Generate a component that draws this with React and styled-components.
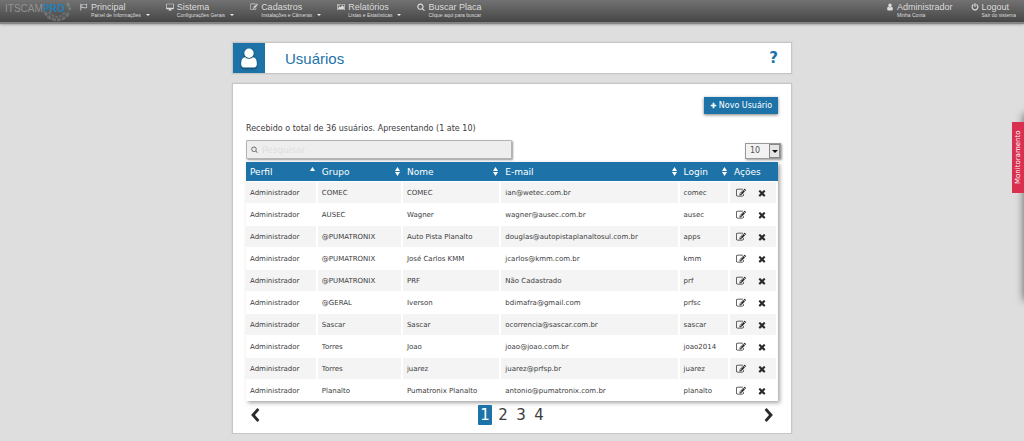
import React from 'react';
import styled, {createGlobalStyle, css} from 'styled-components';

const colors = {
  blue: '#1d73a8',
  text: '#3c3c3c',
  page: '#dedede',
  stripe: '#f4f4f4',
  red: '#d9304f',
};

const fonts = {
  body: '"DejaVu Sans", Verdana, sans-serif',
  title: '"Liberation Sans", Arial, sans-serif',
};

const GlobalStyle = createGlobalStyle`
  * {
    box-sizing: border-box;
  }

  body {
    margin: 0;
    background: ${colors.page};
    color: ${colors.text};
    font-family: ${fonts.body};
    font-size: 8px;
  }
`;

const icons = {
  user: 'M1536 1399q0 109-62.5 187t-150.5 78h-854q-88 0-150.5-78t-62.5-187q0-85 8.5-160.5t31.5-152 58.5-131 94-89 134.5-34.5q131 128 313 128t313-128q76 0 134.5 34.5t94 89 58.5 131 31.5 152 8.5 160.5zm-256-887q0 159-112.5 271.5t-271.5 112.5-271.5-112.5-112.5-271.5 112.5-271.5 271.5-112.5 271.5 112.5 112.5 271.5z',
  edit: 'M888 1184l116-116-152-152-116 116v56h96v96h56zm440-720q-16-16-33 1l-350 350q-17 17-1 33t33-1l350-350q17-17 1-33zm80 594v190q0 119-84.5 203.5t-203.5 84.5h-832q-119 0-203.5-84.5t-84.5-203.5v-832q0-119 84.5-203.5t203.5-84.5h832q63 0 117 25 15 7 18 23 3 17-9 29l-49 49q-14 14-32 8-23-6-45-6h-832q-66 0-113 47t-47 113v832q0 66 47 113t113 47h832q66 0 113-47t47-113v-126q0-13 9-22l64-64q15-15 35-7t20 29zm-96-738l288 288-672 672h-288v-288zm444 132l-92 92-288-288 92-92q28-28 68-28t68 28l152 152q28 28 28 68t-28 68z',
  remove: 'M1490 1322q0 40-28 68l-136 136q-28 28-68 28t-68-28l-294-294-294 294q-28 28-68 28t-68-28l-136-136q-28-28-28-68t28-68l294-294-294-294q-28-28-28-68t28-68l136-136q28-28 68-28t68 28l294 294 294-294q28-28 68-28t68 28l136 136q28 28 28 68t-28 68l-294 294 294 294q28 28 28 68z',
  search: 'M1216 832q0-185-131.5-316.5t-316.5-131.5-316.5 131.5-131.5 316.5 131.5 316.5 316.5 131.5 316.5-131.5 131.5-316.5zm512 832q0 52-38 90t-90 38q-54 0-90-38l-343-342q-179 124-399 124-143 0-273.5-55.5t-225-150-150-225-55.5-273.5 55.5-273.5 150-225 225-150 273.5-55.5 273.5 55.5 225 150 150 225 55.5 273.5q0 220-124 399l343 343q37 37 37 90z',
  power: 'M1664 896q0 156-61 298t-164 245-245 164-298 61-298-61-245-164-164-245-61-298q0-182 80.5-343t226.5-270q43-32 95.5-25t83.5 50q32 42 24.5 94.5t-49.5 84.5q-98 74-151.5 181t-53.5 228q0 104 40.5 198.5t109.5 163.5 163.5 109.5 198.5 40.5 198.5-40.5 163.5-109.5 109.5-163.5 40.5-198.5q0-121-53.5-228t-151.5-181q-42-32-49.5-84.5t24.5-94.5q31-43 84-50t95 25q146 109 226.5 270t80.5 343zm-640-768v640q0 52-38 90t-90 38-90-38-38-90v-640q0-52 38-90t90-38 90 38 38 90z',
  flag: 'M160 128q90 0 90 100v1436h-160v-1436q0-100 70-100zM340 330q220-150 440-70 220 120 440 70l360-140v860q-220 130-400 150-200 0-400-90-220-60-440 80zM480 420v540q160-60 340-20 200 90 380 90 120-20 240-80v-540q-200 90-360 60-300-140-400-110-100 0-200 60z',
  desktop: 'M160 160h1472q130 0 130 130v960q0 130-130 130h-520q0 110 70 180h60v130h-692v-130h60q70-70 70-180h-520q-130 0-130-130v-960q0-130 130-130zM180 300v780h1432v-780z',
  picture: 'M100 224h1592q100 0 100 100v1144q0 100-100 100h-1592q-100 0-100-100v-1144q0-100 100-100zM140 350v1092h1512v-1092zM260 1320v-200l330-330 170 170 450-450 330 330v480zM300 620a150 150 0 1 0 300 0a150 150 0 1 0 -300 0z',
  plus: 'M1600 736v320q0 60-60 60h-424v424q0 60-60 60h-320q-60 0-60-60v-424h-424q-60 0-60-60v-320q0-60 60-60h424v-424q0-60 60-60h320q60 0 60 60v424h424q60 0 60 60z',
  previous: 'M1427 301l-531 595 531 595q37 45 0 90l-166 166q-45 37-90 0l-742-806q-37-45 0-90l742-806q45-37 90 0l166 166q37 45 0 90z',
  next: 'M365 301l531 595-531 595q-37 45 0 90l166 166q45 37 90 0l742-806q37-45 0-90l-742-806q-45-37-90 0l-166 166q-37 45 0 90z',
};

const StyledIcon = styled.svg`
  display: block;
  flex: none;
  width: ${({$size}) => $size}px;
  height: ${({$size}) => $size}px;
  fill: currentColor;
  fill-rule: ${({$solid}) => ($solid ? 'nonzero' : 'evenodd')};
`;

const Icon = ({name, size}) => (
  <StyledIcon $size={size} $solid={name === 'user'} viewBox='0 0 1792 1792' aria-hidden='true'>
    <path d={icons[name]} />
  </StyledIcon>
);

const StyledTopBar = styled.header`
  display: flex;
  justify-content: space-between;
  height: 24px;
  padding: 0 8px 0 4px;
  border-bottom: 2px solid #858585;
  background: linear-gradient(#727272, #464646);
  box-shadow: 0 1px 2px rgba(0, 0, 0, .25);
  font-family: ${fonts.title};
`;

const StyledGroup = styled.nav`
  display: flex;
  gap: ${({$gap}) => $gap}px;
`;

const StyledLogo = styled.svg`
  display: block;
  width: 68px;
  height: 22px;
  margin-right: -8px;
  font-family: ${fonts.title};
  font-size: 10px;
`;

const StyledNavLink = styled.a`
  display: flex;
  gap: 3px;
  padding-top: 3px;
  color: #dcdcdc;
  text-decoration: none;
  white-space: nowrap;
`;

const StyledNavTitle = styled.span`
  display: block;
  font-size: 9px;
  line-height: 9px;
`;

const StyledNavLead = styled.span`
  display: block;
  font-size: 5px;
  line-height: 6px;
`;

const StyledCaret = styled.span`
  align-self: flex-start;
  margin: 11px 0 0 2px;
  border: 2px solid transparent;
  border-top-color: #eee;
  border-bottom: 0;
`;

const StyledMain = styled.main`
  width: 100%;
  max-width: 560px;
  margin: 18px auto 0;
`;

const card = css`
  border: 1px solid #c6c6c6;
  background: #fff;
  box-shadow: 0 0 1px rgba(0, 0, 0, .2);
`;

const StyledHeading = styled.div`
  ${card}
  display: flex;
  align-items: center;
  height: 32px;
  margin-bottom: 9px;
  padding-right: 13px;
  color: ${colors.blue};
`;

const StyledHeadingIcon = styled.div`
  display: flex;
  align-items: center;
  justify-content: center;
  width: 32px;
  height: 30px;
  background: ${colors.blue};
  color: #fff;

  svg {
    filter: drop-shadow(0 1px 1px rgba(0, 0, 0, .5));
  }
`;

const StyledTitle = styled.h1`
  flex: 1;
  margin: 2px 0 0 20px;
  font: 15px/18px ${fonts.title};
`;

const StyledHelp = styled.button`
  padding: 0;
  border: 0;
  background: none;
  color: ${colors.blue};
  font: bold 15px/18px ${fonts.body};
`;

const StyledPanel = styled.section`
  ${card}
  padding: 13px 13px 8px;
`;

const StyledNewButton = styled.button`
  display: flex;
  align-items: center;
  justify-content: center;
  gap: 2px;
  width: 74px;
  height: 17px;
  margin-left: auto;
  padding: 0;
  border: 0;
  background: ${colors.blue};
  box-shadow: 0 1px 3px rgba(0, 0, 0, .5);
  color: #fff;
  font: 8px/12px ${fonts.body};
`;

const StyledSummary = styled.p`
  margin: 9px 0 5px;
  font-size: 8px;
  line-height: 12px;
`;

const StyledFilters = styled.div`
  display: flex;
  align-items: flex-end;
  justify-content: space-between;
  margin-bottom: 3px;
`;

const StyledSearch = styled.label`
  display: flex;
  align-items: center;
  gap: 4px;
  width: 50%;
  height: 19px;
  padding: 0 4px;
  border: 1px solid #b4b4b4;
  border-radius: 1px;
  background: #eee;
  box-shadow: 1px 1px 2px rgba(0, 0, 0, .4);
  color: #777;
`;

const StyledSearchInput = styled.input`
  flex: 1;
  min-width: 0;
  padding: 0;
  border: 0;
  outline: 0;
  background: none;
  font: 9px/12px ${fonts.body};

  &::placeholder {
    color: #dfdfdf;
    opacity: 1;
  }
`;

const StyledSize = styled.label`
  display: flex;
  width: 36px;
  height: 16px;
  margin-right: -3px;
  border: 1px solid #999;
  background: #f2f2f2;
  box-shadow: 1px 1px 2px rgba(0, 0, 0, .4);
`;

const StyledSelect = styled.select`
  flex: 1;
  min-width: 0;
  padding: 0 0 0 4px;
  border: 0;
  appearance: none;
  background: none;
  color: #555;
  font: 8px/14px ${fonts.body};
`;

const StyledSizeArrow = styled.span`
  display: flex;
  align-items: center;
  justify-content: center;
  width: 11px;
  border: 1px solid #888;
  background: #e4e4e4;

  &::before {
    content: '';
    border: 3px solid transparent;
    border-top-color: #111;
    border-bottom: 0;
  }
`;

const StyledTable = styled.table`
  width: 100%;
  table-layout: fixed;
  border-collapse: separate;
  border-spacing: 0;
  box-shadow: 2px 2px 4px rgba(0, 0, 0, .35);
`;

const StyledHeadCell = styled.th`
  width: ${({$width}) => $width};
  height: 19px;
  padding: 0 3px 0 4px;
  background: ${colors.blue};
  color: #fff;
  font-size: 9px;
  font-weight: normal;
  text-align: left;
`;

const StyledHeadLabel = styled.div`
  display: flex;
  align-items: center;
  justify-content: space-between;
`;

const StyledSort = styled.svg`
  display: block;
  flex: none;
  width: 5px;
  height: 9px;
  fill: #fff;
`;

const StyledCell = styled.td`
  height: 22px;
  padding: 0 0 0 4px;
  border-top: 1px solid #fff;
  border-right: 2px solid #fff;
  font-size: 7px;
  line-height: 10px;
  white-space: nowrap;
`;

const StyledRow = styled.tr`
  background: #fff;

  &:nth-child(odd) {
    background: ${colors.stripe};
  }
`;

const StyledActions = styled.div`
  display: flex;
  gap: 11px;
  padding-left: 2px;
`;

const StyledIconButton = styled.button`
  display: block;
  padding: 0;
  border: 0;
  background: none;
  color: #2a2a2a;
`;

const StyledPagination = styled.nav`
  display: flex;
  align-items: center;
  justify-content: space-between;
  margin-top: 4px;
  padding: 0 2px;
`;

const StyledPages = styled.div`
  display: flex;
  gap: 4px;
`;

const StyledPage = styled.button`
  width: 14px;
  height: 20px;
  padding: 0;
  border: 0;
  border-radius: 1px;
  background: ${({$active}) => ($active ? colors.blue : 'none')};
  color: ${({$active}) => ($active ? '#fff' : colors.text)};
  font: 15px/20px ${fonts.body};
`;

const StyledMonitor = styled.button`
  position: fixed;
  top: 122px;
  right: 0;
  width: 12px;
  height: 71px;
  padding: 0;
  border: 0;
  background: ${colors.red};
  color: #fff;
  font: 7px/12px ${fonts.body};
  writing-mode: vertical-rl;

  span {
    display: block;
    transform: rotate(180deg);
  }
`;

// the drawer is closed, only its shadow reaches into the page
const StyledDrawer = styled.div`
  position: fixed;
  top: 114px;
  right: -10px;
  width: 10px;
  height: 186px;
  box-shadow: 0 0 8px rgba(0, 0, 0, .6);
`;

const menu = [
  {icon: 'flag', title: 'Principal', lead: 'Painel de Informações', caret: true},
  {icon: 'desktop', title: 'Sistema', lead: 'Configurações Gerais', caret: true},
  {icon: 'edit', title: 'Cadastros', lead: 'Instalações e Câmeras', caret: true},
  {icon: 'picture', title: 'Relatórios', lead: 'Listas e Estatísticas', caret: true},
  {icon: 'search', title: 'Buscar Placa', lead: 'Clique aqui para buscar'},
];

const account = [
  {icon: 'user', title: 'Administrador', lead: 'Minha Conta'},
  {icon: 'power', title: 'Logout', lead: 'Sair do sistema'},
];

const columns = [
  {label: 'Perfil', width: '13.5%', sort: 'asc'},
  {label: 'Grupo', width: '16%', sort: 'both'},
  {label: 'Nome', width: '18.5%', sort: 'both'},
  {label: 'E-mail', width: '33.5%', sort: 'both'},
  {label: 'Login', width: '9.5%', sort: 'both'},
  {label: 'Ações', width: '9%'},
];

const users = [
  ['Administrador', 'COMEC', 'COMEC', 'ian@wetec.com.br', 'comec'],
  ['Administrador', 'AUSEC', 'Wagner', 'wagner@ausec.com.br', 'ausec'],
  ['Administrador', '@PUMATRONIX', 'Auto Pista Planalto', 'douglas@autopistaplanaltosul.com.br', 'apps'],
  ['Administrador', '@PUMATRONIX', 'José Carlos KMM', 'jcarlos@kmm.com.br', 'kmm'],
  ['Administrador', '@PUMATRONIX', 'PRF', 'Não Cadastrado', 'prf'],
  ['Administrador', '@GERAL', 'Iverson', 'bdimafra@gmail.com', 'prfsc'],
  ['Administrador', 'Sascar', 'Sascar', 'ocorrencia@sascar.com.br', 'sascar'],
  ['Administrador', 'Torres', 'Joao', 'joao@joao.com.br', 'joao2014'],
  ['Administrador', 'Torres', 'juarez', 'juarez@prfsp.br', 'juarez'],
  ['Administrador', 'Planalto', 'Pumatronix Planalto', 'antonio@pumatronix.com.br', 'planalto'],
];

const Logo = () => (
  <StyledLogo viewBox='0 0 68 22' role='img' aria-label='ITSCAMPRO'>
    <g fill='none' stroke='#a4a8ab'>
      <path d='M41 12A13 13 0 0 0 65 12M63 3A13 13 0 0 1 66 10' strokeWidth='3' strokeDasharray='4 1' opacity='.35' />
      <path d='M45 12A9 9 0 0 0 61 12' strokeWidth='2' strokeDasharray='3 1' opacity='.3' />
    </g>
    <text x='1' y='12' fill='#929292'>ITSCAM</text>
    <text x='39' y='12' fill='#2480b8' fontWeight='bold'>PRO</text>
  </StyledLogo>
);

const NavLink = ({icon, title, lead, caret}) => (
  <StyledNavLink href='#'>
    <Icon name={icon} size={8} />
    <span>
      <StyledNavTitle>{title}</StyledNavTitle>
      <StyledNavLead>{lead}</StyledNavLead>
    </span>
    {caret && <StyledCaret />}
  </StyledNavLink>
);

const Sort = ({direction}) => (
  <StyledSort viewBox='0 0 5 9' aria-hidden='true'>
    {direction === 'asc'
      ? <path d='M0 4h5L2.500 0z' />
      : <path d='M0 4h5L2.500 0zM0 5h5L2.500 9z' />}
  </StyledSort>
);

const UsersTable = () => (
  <StyledTable>
    <thead>
      <tr>
        {columns.map(({label, width, sort}) => (
          <StyledHeadCell key={label} $width={width} scope='col'>
            <StyledHeadLabel>
              {label}
              {sort && <Sort direction={sort} />}
            </StyledHeadLabel>
          </StyledHeadCell>
        ))}
      </tr>
    </thead>
    <tbody>
      {users.map((user) => (
        <StyledRow key={user[3]}>
          {user.map((value, index) => <StyledCell key={index}>{value}</StyledCell>)}
          <StyledCell>
            <StyledActions>
              <StyledIconButton aria-label='Editar'><Icon name='edit' size={10} /></StyledIconButton>
              <StyledIconButton aria-label='Excluir'><Icon name='remove' size={10} /></StyledIconButton>
            </StyledActions>
          </StyledCell>
        </StyledRow>
      ))}
    </tbody>
  </StyledTable>
);

const App = () => (
  <>
    <GlobalStyle />
    <StyledTopBar>
      <StyledGroup $gap={16}>
        <Logo />
        {menu.map((item) => <NavLink key={item.title} {...item} />)}
      </StyledGroup>
      <StyledGroup $gap={18}>
        {account.map((item) => <NavLink key={item.title} {...item} />)}
      </StyledGroup>
    </StyledTopBar>
    <StyledMain>
      <StyledHeading>
        <StyledHeadingIcon><Icon name='user' size={22} /></StyledHeadingIcon>
        <StyledTitle>Usuários</StyledTitle>
        <StyledHelp>?</StyledHelp>
      </StyledHeading>
      <StyledPanel>
        <StyledNewButton>
          <Icon name='plus' size={7} />
          Novo Usuário
        </StyledNewButton>
        <StyledSummary>Recebido o total de 36 usuários. Apresentando (1 ate 10)</StyledSummary>
        <StyledFilters>
          <StyledSearch>
            <Icon name='search' size={7} />
            <StyledSearchInput type='text' placeholder='Pesquisar' aria-label='Pesquisar' />
          </StyledSearch>
          <StyledSize>
            <StyledSelect defaultValue='10' aria-label='Usuários por página'>
              <option>10</option>
              <option>25</option>
              <option>50</option>
            </StyledSelect>
            <StyledSizeArrow />
          </StyledSize>
        </StyledFilters>
        <UsersTable />
        <StyledPagination>
          <StyledIconButton aria-label='Anterior'><Icon name='previous' size={14} /></StyledIconButton>
          <StyledPages>
            {[1, 2, 3, 4].map((page) => (
              <StyledPage key={page} $active={page === 1}>{page}</StyledPage>
            ))}
          </StyledPages>
          <StyledIconButton aria-label='Próxima'><Icon name='next' size={14} /></StyledIconButton>
        </StyledPagination>
      </StyledPanel>
    </StyledMain>
    <StyledDrawer />
    <StyledMonitor><span>Monitoramento</span></StyledMonitor>
  </>
);

export default App;
